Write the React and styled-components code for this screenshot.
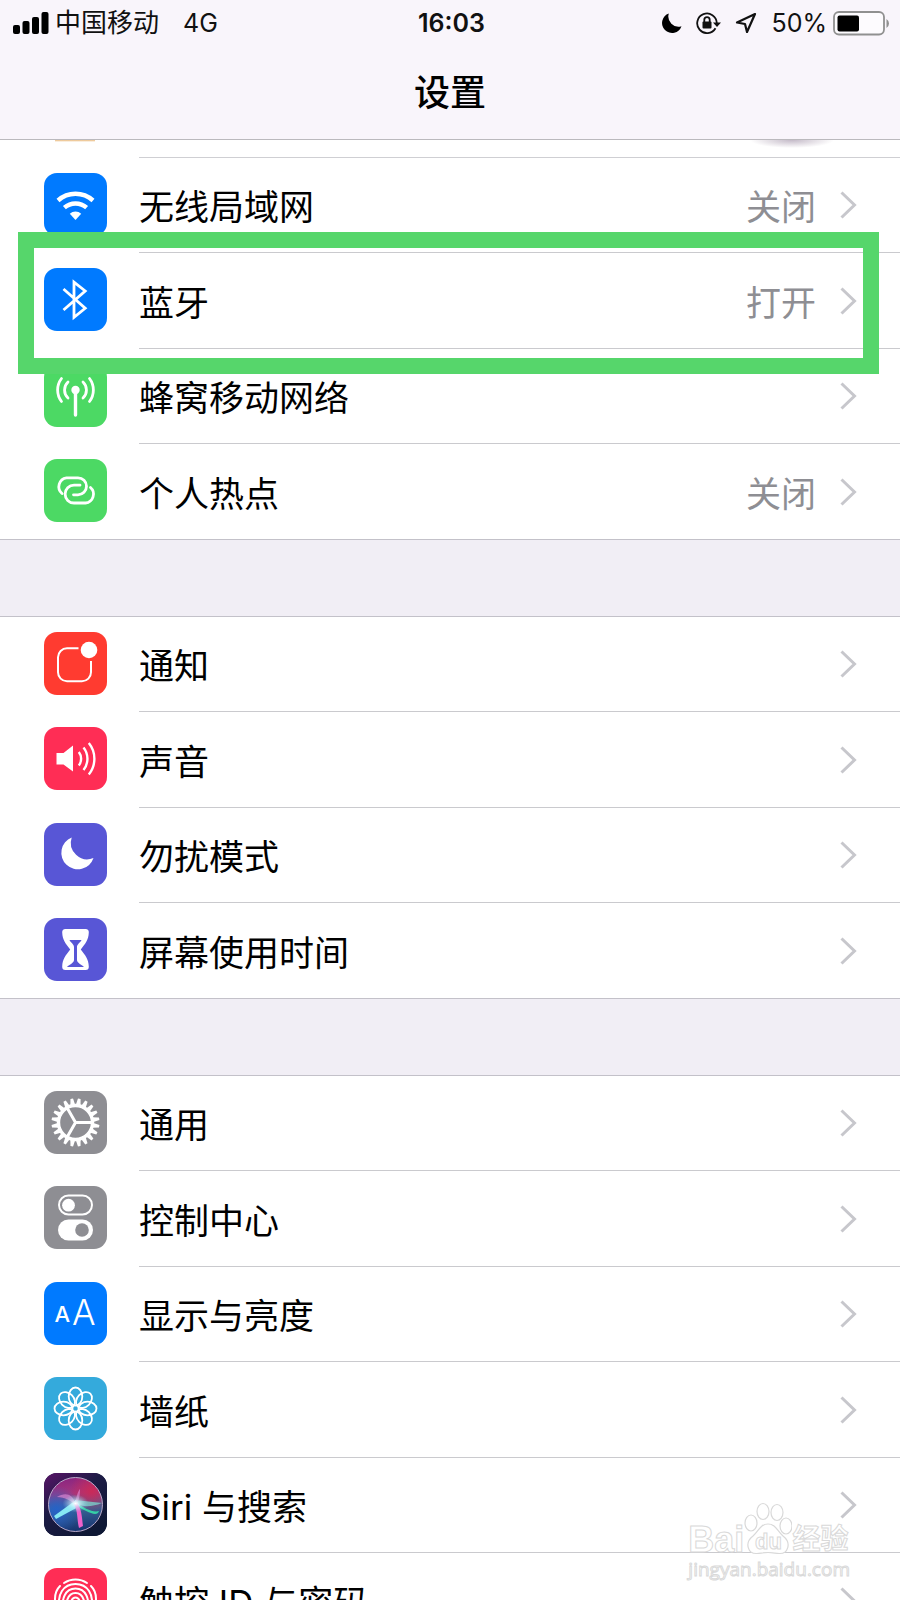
import styled, { createGlobalStyle } from "styled-components";


const gearTeeth = Array.from({ length: 20 }, (_, i) => i * 18 + 9);
const petals = [0, 45, 90, 135, 180, 225, 270, 315];

const WifiIcon = () => (
    <svg viewBox="0 0 63 63" fill="none" stroke="#fff" strokeWidth="4.4">
        <path d="M14 27.5A26.2 26.2 0 0 1 49 27.5" />
        <path d="M20.4 34.7A16.6 16.6 0 0 1 42.6 34.7" />
        <path d="M31.5 47L25.8 40.7A8.5 8.5 0 0 1 37.2 40.7Z" fill="#fff" stroke="none" />
    </svg>
);

const BluetoothIcon = () => (
    <svg viewBox="0 0 63 63" fill="none" stroke="#fff" strokeWidth="2.8">
        <path d="M19.5 21L41.2 40.3L30 49.3V14.2L41.2 23L19.5 42" />
    </svg>
);

const CellularIcon = () => (
    <svg viewBox="0 0 63 63" fill="none" stroke="#fff" strokeWidth="2.8" strokeLinecap="round">
        <circle cx="31.5" cy="26" r="4.2" fill="#fff" stroke="none" />
        <path d="M31.5 28V51" strokeWidth="3.4" />
        <path d="M24 18A11 11 0 0 0 24 34M39 18A11 11 0 0 1 39 34" />
        <path d="M17.5 14.5A19 19 0 0 0 17.5 37.5M45.5 14.5A19 19 0 0 1 45.5 37.5" />
    </svg>
);

const HotspotIcon = () => (
    <svg viewBox="0 0 63 63" fill="none" stroke="#fff" strokeWidth="2.8" strokeLinecap="round">
        <path d="M18 34.5A9 9 0 0 1 22.5 18.8H34A8.5 8.5 0 0 1 34 35.8H29.5" />
        <path d="M46.5 28.5A8.9 8.9 0 0 1 41.5 44H30A8.9 8.9 0 0 1 30 26.2H36" />
    </svg>
);

const NotificationIcon = () => (
    <svg viewBox="0 0 63 63" fill="none" stroke="#fff" strokeWidth="2">
        <path d="M34.5 16.3H23A9 9 0 0 0 14 25.3V40.3A9 9 0 0 0 23 49.3H38A9 9 0 0 0 47 40.3V29" />
        <circle cx="45" cy="18" r="8.3" fill="#fff" stroke="none" />
    </svg>
);

const SoundIcon = () => (
    <svg viewBox="0 0 63 63" fill="none" stroke="#fff" strokeWidth="2.4">
        <path d="M12.5 26H19.5L29 18.5V44.5L19.5 37.5H12.5Z" fill="#fff" stroke="none" />
        <path d="M34.8 25A11 11 0 0 1 34.8 38.5" />
        <path d="M39.5 20.5A18 18 0 0 1 39.5 43" />
        <path d="M44.8 16A25 25 0 0 1 44.8 47.5" />
    </svg>
);

const MoonIcon = () => (
    <svg viewBox="0 0 63 63" fill="#fff">
        <path d="M27.7 14.5A16.5 16.5 0 1 0 49.5 35A16.5 16.5 0 0 1 27.7 14.5Z" />
    </svg>
);

const HourglassIcon = () => (
    <svg viewBox="0 0 63 63">
        <path
            fill="#fff"
            d="M21.5 11H41.5Q45 11 44.8 14.5C44.5 22 41.5 25.5 36.8 31.5C41.5 37.5 44.5 41 44.8 48.5Q45 52 41.5 52H21.5Q18 52 18.2 48.5C18.5 41 21.5 37.5 26.2 31.5C21.5 25.5 18.5 22 18.2 14.5Q18 11 21.5 11Z"
        />
        <path fill="#5856d6" d="M25.5 22H37.5C36.5 24.5 33 26 33 29V42C33 45 37.5 46.5 40 49H23C25.5 46.5 30 45 30 42V29C30 26 26.5 24.5 25.5 22Z" />
    </svg>
);

const GearIcon = () => (
    <svg viewBox="0 0 63 63" fill="none" stroke="#fff">
        <circle cx="31.5" cy="31.5" r="17" strokeWidth="3.4" />
        <path d="M31.5 31.5H47M31.5 31.5L23.5 17.6M31.5 31.5L23.5 45.4" strokeWidth="3" />
        {gearTeeth.map((angle) => (
            <path
                key={angle}
                d="M48.5 29L55.5 30.2V32.8L48.5 34Z"
                fill="#fff"
                stroke="none"
                transform={`rotate(${angle} 31.5 31.5)`}
            />
        ))}
    </svg>
);

const ControlCenterIcon = () => (
    <svg viewBox="0 0 63 63">
        <rect x="15" y="9.5" width="33" height="19" rx="9.5" fill="none" stroke="#fff" strokeWidth="2" />
        <circle cx="24.5" cy="19.2" r="6.4" fill="#fff" />
        <rect x="14" y="33.5" width="35" height="21" rx="10.5" fill="#fff" />
        <circle cx="38" cy="44" r="6.8" fill="#8e8e93" />
    </svg>
);

const DisplayIcon = () => (
    <svg viewBox="0 0 63 63" fill="#fff" fontFamily="Inter, sans-serif">
        <text x="10.5" y="40" fontSize="22" fontWeight="500">A</text>
        <text x="28" y="43" fontSize="35" fontWeight="300">A</text>
    </svg>
);

const WallpaperIcon = () => (
    <svg viewBox="0 0 63 63" fill="none" stroke="#fff" strokeWidth="1.8">
        {petals.map((angle) => (
            <ellipse
                key={angle}
                cx="31.5"
                cy="19.5"
                rx="6.8"
                ry="9"
                transform={`rotate(${angle} 31.5 31.5)`}
            />
        ))}
    </svg>
);

const SiriIcon = () => (
    <svg viewBox="0 0 63 63">
        <defs>
            <linearGradient id="siriBack" x1="0" y1="0" x2="0.7" y2="1">
                <stop offset="0" stopColor="#5a1468" />
                <stop offset="0.45" stopColor="#1d1b45" />
                <stop offset="1" stopColor="#0e1834" />
            </linearGradient>
            <linearGradient id="siriBall" x1="0.4" y1="0" x2="0.5" y2="1">
                <stop offset="0" stopColor="#8a2580" />
                <stop offset="0.3" stopColor="#a5367f" />
                <stop offset="0.55" stopColor="#3c6798" />
                <stop offset="1" stopColor="#16336f" />
            </linearGradient>
            <radialGradient id="siriRed" cx="0.8" cy="0.25" r="0.4">
                <stop offset="0" stopColor="#c92a58" />
                <stop offset="1" stopColor="#c92a58" stopOpacity="0" />
            </radialGradient>
            <radialGradient id="siriBlue" cx="0.15" cy="0.6" r="0.45">
                <stop offset="0" stopColor="#2662c8" />
                <stop offset="1" stopColor="#2662c8" stopOpacity="0" />
            </radialGradient>
            <radialGradient id="siriGlow">
                <stop offset="0" stopColor="#fff" />
                <stop offset="0.3" stopColor="#dff8ff" stopOpacity="0.7" />
                <stop offset="1" stopColor="#8fd8ee" stopOpacity="0" />
            </radialGradient>
        </defs>
        <rect width="63" height="63" fill="url(#siriBack)" />
        <circle cx="31.5" cy="31.5" r="27" fill="url(#siriBall)" />
        <circle cx="31.5" cy="31.5" r="27" fill="url(#siriRed)" />
        <circle cx="31.5" cy="31.5" r="27" fill="url(#siriBlue)" />
        <path d="M31 29C40 35 49 40 55 38C53 45 42 38 31 32Z" fill="#36cfa6" />
        <path d="M31 27L58 30C48 34 40 34 31 31Z" fill="#7be0d4" opacity="0.7" />
        <path d="M32 27L10 43L12 46L36 33Z" fill="#86e8f3" />
        <path d="M30 31C34 38 33 48 35 55L39 53C38 46 38 36 33 30Z" fill="#ee62cc" />
        <path d="M13 24C21 19 29 21 31 30C33 22 34 18 36 16C36 25 34 29 32 32C27 28 21 24 13 24Z" fill="#e187d3" opacity="0.65" />
        <ellipse cx="31.5" cy="30.5" rx="13" ry="9" fill="url(#siriGlow)" />
        <circle cx="31.5" cy="31.5" r="27" fill="none" stroke="#b9a9c9" strokeWidth="1" />
    </svg>
);

const TouchIdIcon = () => (
    <svg viewBox="0 0 63 63" fill="none" stroke="#fff" strokeWidth="2" strokeLinecap="round">
        <path d="M20 15A20.5 20.5 0 0 1 43 15" />
        <path d="M12 38C9 26 13 21 16 18M51 38C54 26 50 21 47 18" />
        <path d="M16 42C12 26 20 16 31.5 16S51 26 47 42" />
        <path d="M20 46C16 30 22 20.5 31.5 20.5S47 30 43 46" />
        <path d="M24 49C20 34 24 25 31.5 25S43 34 39 49" />
        <path d="M28 51C25 36 27 29.5 31.5 29.5S38 36 35 51" />
        <path d="M31.5 34V52" />
    </svg>
);

const Chevron = () => (
    <ChevronSvg viewBox="0 0 17 28" fill="none" stroke="#c7c7cc" strokeWidth="3">
        <path d="M1.5 1.5L14.5 14L1.5 26.5" />
    </ChevronSvg>
);

const groups = [
    [
        { label: "无线局域网", value: "关闭", color: "#007aff", icon: <WifiIcon /> },
        { label: "蓝牙", value: "打开", color: "#007aff", icon: <BluetoothIcon />, marked: true },
        { label: "蜂窝移动网络", color: "#4cd964", icon: <CellularIcon /> },
        { label: "个人热点", value: "关闭", color: "#4cd964", icon: <HotspotIcon /> },
    ],
    [
        { label: "通知", color: "#ff3b30", icon: <NotificationIcon /> },
        { label: "声音", color: "#ff2d55", icon: <SoundIcon /> },
        { label: "勿扰模式", color: "#5856d6", icon: <MoonIcon /> },
        { label: "屏幕使用时间", color: "#5856d6", icon: <HourglassIcon /> },
    ],
    [
        { label: "通用", color: "#8e8e93", icon: <GearIcon /> },
        { label: "控制中心", color: "#8e8e93", icon: <ControlCenterIcon /> },
        { label: "显示与亮度", color: "#007aff", icon: <DisplayIcon /> },
        { label: "墙纸", color: "#34aadc", icon: <WallpaperIcon /> },
        { label: "Siri 与搜索", color: "#14183a", icon: <SiriIcon /> },
        { label: "触控 ID 与密码", color: "#ff2d55", icon: <TouchIdIcon /> },
    ],
];

const StatusBar = () => (
    <Status>
        <StatusSide>
            <svg width="36" height="23" viewBox="0 0 36 23">
                <rect x="0" y="13" width="7" height="9" rx="2" />
                <rect x="9.5" y="9" width="7" height="13" rx="2" />
                <rect x="19" y="5" width="7" height="17" rx="2" />
                <rect x="28.5" y="0" width="7" height="22" rx="2" />
            </svg>
            <Carrier>中国移动</Carrier>
            <span>4G</span>
        </StatusSide>
        <Clock>16:03</Clock>
        <StatusSide $end>
            <StatusIcons>
                <svg width="20" height="20" viewBox="0 0 20 20">
                    <path d="M6.8 0.5A10 10 0 1 0 19.5 13.2A10.2 10.2 0 0 1 6.8 0.5Z" />
                </svg>
                <svg width="25" height="22" viewBox="0 0 25 22" fill="none" stroke="#111" strokeWidth="1.8">
                    <path d="M19.5 16.2A9.8 9.8 0 1 1 20.8 11" />
                    <path d="M17 10.5H25L21 15Z" fill="#111" stroke="none" />
                    <rect x="6.5" y="9.5" width="9" height="7" rx="1" fill="#111" stroke="none" />
                    <path d="M8.3 10V7.8A2.7 2.7 0 0 1 13.7 7.8V10" />
                </svg>
                <svg width="22" height="22" viewBox="0 0 22 22" fill="none" stroke="#111" strokeWidth="2.2" strokeLinejoin="round">
                    <path d="M20 2L2 10.5L10 12L12 20Z" />
                </svg>
            </StatusIcons>
            <span>50%</span>
            <svg width="57" height="25" viewBox="0 0 57 25">
                <rect x="1" y="1" width="50" height="22.5" rx="5" fill="#fdfbfe" stroke="#909090" strokeWidth="1.8" />
                <rect x="4.5" y="4.5" width="21.5" height="16" rx="2" fill="#000" />
                <path d="M53.5 8V17Q56 15.5 56 12.5T53.5 8Z" fill="#909090" />
            </svg>
        </StatusSide>
    </Status>
);

const Watermark = () => (
    <Mark>
        <MarkLogo>
            <span>Bai</span>
            <svg width="48" height="54" viewBox="0 0 48 54" fill="#fff" stroke="#d9d9d9" strokeWidth="1.2">
                <ellipse cx="7" cy="21" rx="6" ry="8" />
                <ellipse cx="19" cy="9.5" rx="6" ry="8" />
                <ellipse cx="33" cy="10.5" rx="6" ry="8" />
                <ellipse cx="42" cy="24" rx="6" ry="8" />
                <path d="M24 22C32 22 33 29 39 34C48 41 44 52 35 51.5C30 51 27 50.5 24 50.5S18 51 13 51.5C4 52 0 41 9 34C15 29 16 22 24 22Z" />
                <text x="11" y="47" fontSize="22" fontFamily="Liberation Sans, sans-serif" fontWeight="700" strokeWidth="1">du</text>
            </svg>
            <MarkName>经验</MarkName>
        </MarkLogo>
        <MarkUrl>jingyan.baidu.com</MarkUrl>
    </Mark>
);

const App = () => {
    return (
        <Screen>
            <GlobalStyle />
            <Header>
                <StatusBar />
                <Title>设置</Title>
            </Header>

            <Content>
                <ProfileEdge />
                {groups.map((rows, index) => (
                    <Group key={index} $first={index === 0}>
                        {rows.map((row) => (
                            <Row key={row.label}>
                                <RowLink href="#">
                                    <IconTile $color={row.color}>{row.icon}</IconTile>
                                    <RowBody>
                                        <Label>{row.label}</Label>
                                        {row.value && <Value>{row.value}</Value>}
                                        <Chevron />
                                    </RowBody>
                                </RowLink>
                                {row.marked && <Highlight />}
                            </Row>
                        ))}
                    </Group>
                ))}
            </Content>

            <Watermark />
        </Screen>
    );
};
export default App;

const GlobalStyle = createGlobalStyle`
* {
    box-sizing: border-box;
}
body {
    margin: 0;
    font-family: Inter, "Noto Sans CJK SC", sans-serif;
    color: #000;
}
svg {
    display: block;
    flex: none;
}
`;

const Screen = styled.div`
position: relative;
display: flex;
flex-direction: column;
height: 100vh;
overflow: hidden;
background-color: #f1eef5;
`;

const Header = styled.header`
flex: none;
height: 140px;
background-color: #f9f5fb;
border-bottom: 1px solid #bbb9bd;
`;

const Status = styled.div`
display: grid;
grid-template-columns: 1fr auto 1fr;
align-items: center;
height: 46px;
padding: 0 10px 0 13px;
font-size: 25px;
line-height: 30px;
color: #111;
`;

const StatusSide = styled.div`
display: flex;
align-items: center;
justify-content: ${(props) => (props.$end ? "flex-end" : "flex-start")};
gap: 6px;
`;

const Carrier = styled.span`
font-size: 26px;
line-height: 32px;
margin-right: 18px;
`;

const Clock = styled.time`
font-weight: 600;
`;

const StatusIcons = styled.div`
display: flex;
align-items: center;
gap: 14px;
margin-right: 8px;
`;

const Title = styled.h1`
margin: 0;
text-align: center;
font-size: 36px;
font-weight: 500;
line-height: 94px;
`;

const Content = styled.main`
flex: 1;
min-height: 0;
overflow: hidden;
`;

const ProfileEdge = styled.div`
height: 18px;
background:
    linear-gradient(#e9b97c, #fff) 55px 0 / 40px 2px no-repeat,
    radial-gradient(ellipse 42px 8px at 88% 0, #c4bac8, #fff0),
    linear-gradient(to right, #fff 139px, #cfcfd3 139px) 0 100% / 100% 1px no-repeat,
    #fff;
`;

const Group = styled.ul`
margin: ${(props) => (props.$first ? "0" : "76px 0 0")};
padding: 0;
list-style: none;
background-color: #fff;
border-top: ${(props) => (props.$first ? "none" : "1px solid #c3c1c9")};
`;

const Row = styled.li`
position: relative;
height: 95px;

&:nth-child(even) {
    height: 96px;
}

&:last-child {
    border-bottom: 1px solid #c3c1c9;
}
`;

const RowLink = styled.a`
display: flex;
align-items: flex-start;
gap: 32px;
height: 100%;
padding-left: 44px;
color: inherit;
text-decoration: none;
`;

const IconTile = styled.span`
flex: none;
width: 63px;
height: 63px;
margin-top: 15px;
border-radius: 13px;
overflow: hidden;
background-color: ${(props) => props.$color};
`;

const RowBody = styled.span`
flex: 1;
align-self: stretch;
display: flex;
align-items: center;
padding-right: 43px;
border-bottom: 1px solid #cacace;

li:last-child & {
    border-bottom: none;
}
`;

const Label = styled.span`
flex: 1;
padding-top: 4px;
font-size: 35px;
line-height: 50px;
`;

const Value = styled.span`
padding-top: 4px;
font-size: 35px;
line-height: 50px;
color: #8e8e93;
margin-right: 24px;
`;

const ChevronSvg = styled.svg`
width: 17px;
height: 28px;
`;

const Highlight = styled.div`
position: absolute;
z-index: 1;
top: -21px;
bottom: -25px;
left: 18px;
right: 21px;
border: 16px solid #56d66b;
pointer-events: none;
`;

const Mark = styled.div`
position: absolute;
right: 50px;
bottom: 18px;
font-family: "Liberation Sans", "Noto Sans CJK SC", sans-serif;
color: #fff;
-webkit-text-stroke: 1px #d9d9d9;
`;

const MarkLogo = styled.div`
display: flex;
align-items: flex-end;
font-size: 36px;
font-weight: 700;
line-height: 32px;
`;

const MarkName = styled.span`
font-size: 28px;
`;

const MarkUrl = styled.div`
font-family: "Open Sans", sans-serif;
font-size: 19px;
line-height: 26px;
`;
